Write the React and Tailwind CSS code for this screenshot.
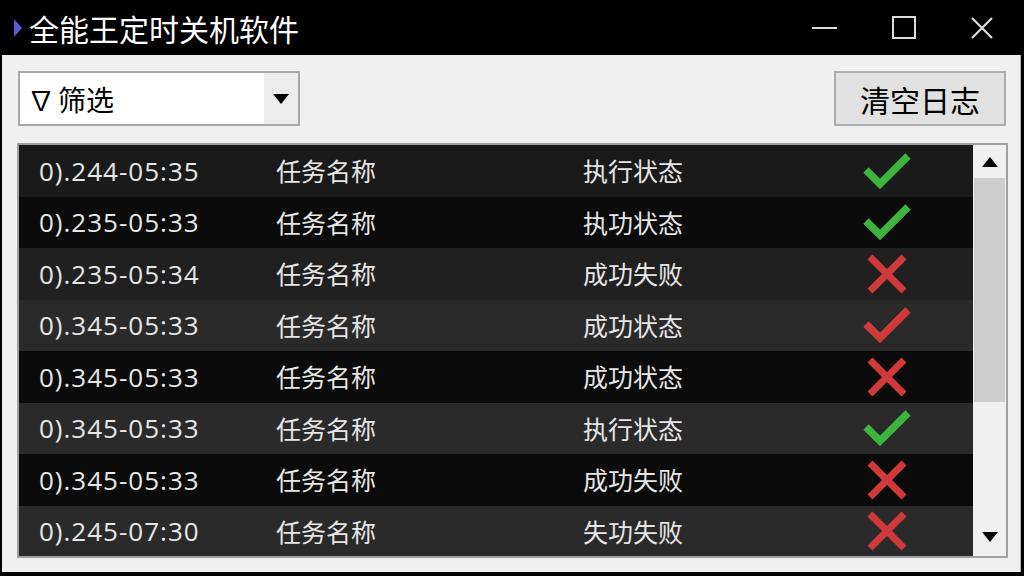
import React from "react";

const rows = [
  { t: "0).244-05:35", s: "执行状态", icon: "check-green", bg: "bg-[#1a1a1a]" },
  { t: "0).235-05:33", s: "执功状态", icon: "check-green", bg: "bg-[#0b0b0b]" },
  { t: "0).235-05:34", s: "成功失败", icon: "x", bg: "bg-[#202020]" },
  { t: "0).345-05:33", s: "成功状态", icon: "check-red", bg: "bg-[#2a2a2a]" },
  { t: "0).345-05:33", s: "成功状态", icon: "x", bg: "bg-[#0b0b0b]" },
  { t: "0).345-05:33", s: "执行状态", icon: "check-green", bg: "bg-[#2a2a2a]" },
  { t: "0).345-05:33", s: "成功失败", icon: "x", bg: "bg-[#0b0b0b]" },
  { t: "0).245-07:30", s: "失功失败", icon: "x", bg: "bg-[#2a2a2a]" },
];

const cjk = { fontFamily: '"Noto Sans CJK SC", sans-serif' };

function Icon({ kind }) {
  if (kind === "x") {
    return (
      <svg width="44" height="40" viewBox="0 0 44 40">
        <path d="M5 3 L39 37 M39 3 L5 37" stroke="#d03a3a" strokeWidth="7" fill="none" />
      </svg>
    );
  }
  const color = kind === "check-green" ? "#3db43d" : "#d03a3a";
  return (
    <svg width="48" height="38" viewBox="0 0 48 38">
      <path d="M3 18 L17 32 L45 4" stroke={color} strokeWidth="7.5" fill="none" strokeLinejoin="miter" />
    </svg>
  );
}

export default function App() {
  return (
    <div className="w-[1024px] h-[576px] bg-black flex flex-col overflow-hidden" style={{ fontFamily: '"Noto Sans", "Noto Sans CJK SC", sans-serif' }}>
      {/* Title bar */}
      <div className="h-[55px] flex items-center shrink-0">
        <svg width="10" height="20" viewBox="0 0 10 20" className="ml-[13px] mr-[6px]">
          <path d="M1 1 L9 10 L1 19 Z" fill="#5b5bd6" />
        </svg>
        <div className="text-white text-[30px] leading-none" style={cjk}>全能王定时关机软件</div>
        <div className="flex-1" />
        <div className="w-[80px] h-[55px] flex items-center justify-center">
          <div className="w-[25px] h-[2px] bg-[#dcdcdc]" />
        </div>
        <div className="w-[80px] h-[55px] flex items-center justify-center">
          <div className="w-[24px] h-[23px] border-2 border-[#dcdcdc]" />
        </div>
        <div className="w-[80px] h-[55px] flex items-center justify-center pr-[4px]">
          <svg width="24" height="24" viewBox="0 0 24 24">
            <path d="M2 2 L22 22 M22 2 L2 22" stroke="#dcdcdc" strokeWidth="2.2" />
          </svg>
        </div>
      </div>

      {/* Body */}
      <div className="flex-1 flex bg-black pb-[4px]">
        <div className="flex-1 bg-[#f0f0f0] ml-[2px] mr-[3px] border-r border-[#b0b0b0] flex flex-col pl-[15px] pr-[12px] pt-[16px]">
          {/* toolbar */}
          <div className="flex items-center justify-between h-[55px]">
            <div className="w-[282px] h-[55px] ml-[1px] border-2 border-[#a8a8a8] bg-white flex items-center">
              <div className="flex-1 flex items-center pl-[8px] text-[28px] text-black leading-none" style={cjk}>
                <span className="text-[26px] mr-[4px]">∇</span>筛选
              </div>
              <div className="w-[34px] h-full bg-[#ececec] flex items-center justify-center">
                <svg width="16" height="10" viewBox="0 0 16 10"><path d="M0 0 H16 L8 10 Z" fill="#000" /></svg>
              </div>
            </div>
            <div className="w-[172px] h-[55px] mr-[2px] border-2 border-[#adadad] bg-[#e1e1e1] flex items-center justify-center text-[30px] text-black leading-none" style={cjk}>
              清空日志
            </div>
          </div>

          {/* list */}
          <div className="mt-[17px] h-[415px] border-2 border-[#a0a0a0] flex overflow-hidden">
            <div className="flex-1 flex flex-col overflow-hidden">
              {rows.map((r, i) => (
                <div key={i} className={`h-[51.5px] shrink-0 flex items-center text-[#e6e6e6] leading-none ${r.bg}`}>
                  <div className="w-[257px] pl-[20px] text-[26px] tracking-[1px]" style={{ fontFamily: '"Open Sans", "Noto Sans", sans-serif' }}>{r.t}</div>
                  <div className="w-[307px] text-[25px]" style={cjk}>任务名称</div>
                  <div className="w-[264px] text-[25px]" style={cjk}>{r.s}</div>
                  <div className="w-[80px] flex justify-center"><Icon kind={r.icon} /></div>
                </div>
              ))}
            </div>
            <div className="w-[33px] bg-[#f0f0f0] flex flex-col">
              <div className="h-[33px] flex items-center justify-center">
                <svg width="16" height="10" viewBox="0 0 16 10"><path d="M0 10 H16 L8 0 Z" fill="#000" /></svg>
              </div>
              <div className="h-[224px] bg-[#cdcdcd] mx-[1px]" />
              <div className="flex-1" />
              <div className="h-[38px] flex items-center justify-center">
                <svg width="16" height="10" viewBox="0 0 16 10"><path d="M0 0 H16 L8 10 Z" fill="#000" /></svg>
              </div>
            </div>
          </div>
          <div className="flex-1" />
        </div>
      </div>
    </div>
  );
}
